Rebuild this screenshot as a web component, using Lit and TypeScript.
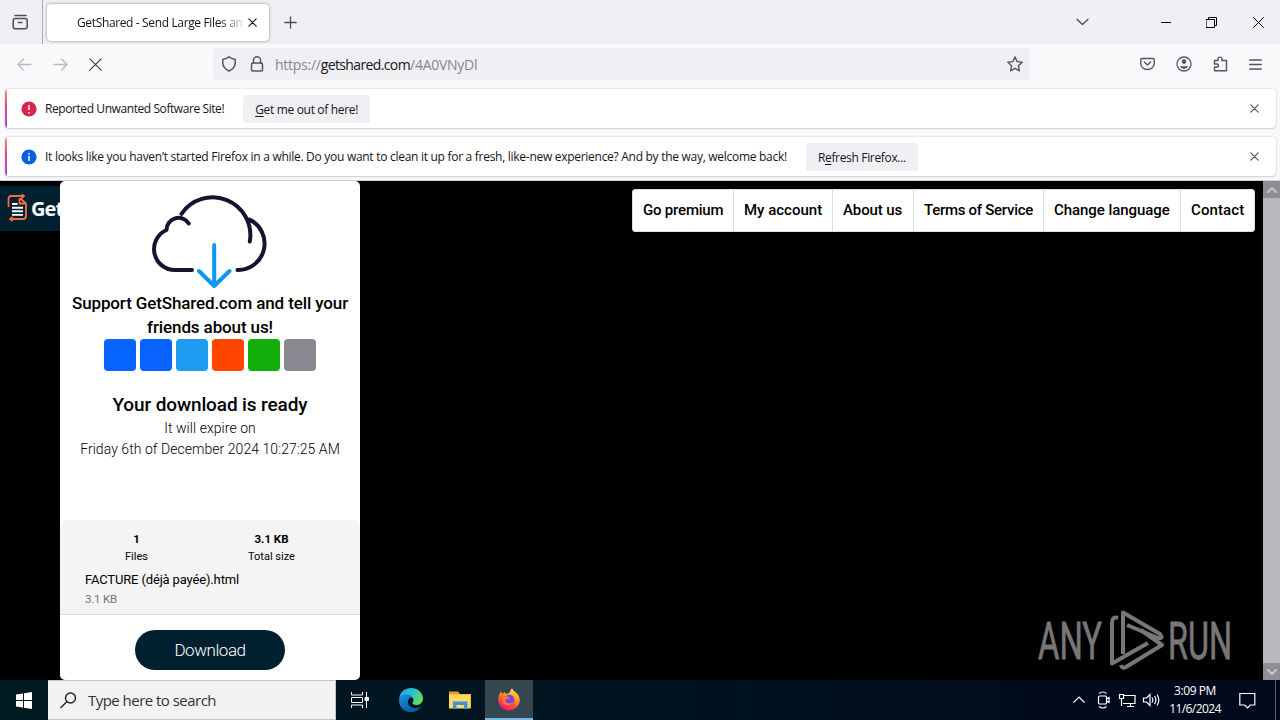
import { LitElement, html, css, svg } from "lit";

const icon = (w: number, h: number, body: unknown, cls = "") =>
  html`<svg class="ic ${cls}" width=${w} height=${h} viewBox="0 0 ${w} ${h}" fill="none" stroke="currentColor" stroke-width="1.3" stroke-linecap="round" stroke-linejoin="round">${body}</svg>`;

const cross = (n: number, cls = "") => icon(n, n, svg`<path d="M.8 .8L${n - 0.8} ${n - 0.8}M${n - 0.8} .8L.8 ${n - 0.8}" stroke-width="1.15"/>`, cls);

class BrowserChrome extends LitElement {
  static styles = css`
    :host { display: block; height: 180px; background: #f9f9fb; color: #15141a; font: 12px/18px "Open Sans", sans-serif; letter-spacing: -0.38px; }
    * { box-sizing: border-box; }
    .ic { display: block; flex: none; }
    .tabs { display: flex; height: 44px; background: #f0f0f4; align-items: center; color: #4e4d56; }
    .view { width: 43px; height: 44px; padding: 14px 0 0 12px; border-right: 1px solid #a9a9b2; }
    .tab { width: 222px; height: 37px; margin: 0 15px 0 4px; background: #fff; border-radius: 4px; box-shadow: 0 0 3px rgba(0,0,0,.45); display: flex; align-items: center; padding: 0 11px 0 30px; color: #15141a; }
    .title { width: 165px; margin-right: 6px; padding-top: 2px; white-space: nowrap; overflow: hidden; letter-spacing: -0.36px; -webkit-mask-image: linear-gradient(90deg, #000 142px, transparent 170px); }
    .down { margin-left: 779px; }
    .min { margin-left: 72px; color: #000; }
    .max { margin-left: 35px; color: #000; }
    .close { margin-left: 36px; color: #000; }
    .bar { display: flex; height: 42px; align-items: center; padding: 0 0 2px 17px; color: #55545e; }
    .off { color: #b9b9c0; margin-right: 21px; }
    .stop { margin-right: 111px; color: #3a3942; }
    .url { width: 817px; height: 32px; background: #f0f0f4; border-radius: 3px; display: flex; align-items: center; padding: 0 7px 0 9px; }
    .lock { margin: 0 11px 0 14px; }
    .addr { flex: 1; font-size: 14px; letter-spacing: -0.26px; color: #85848e; padding-top: 2px; white-space: nowrap; }
    .addr b { font-weight: 400; color: #15141a; letter-spacing: -0.62px; }
    .tools { display: flex; align-items: center; gap: 21px; margin-left: 110px; }
    .note { display: flex; align-items: center; height: 39px; margin: 3px 4px 9px 5px; background: #fff; border-radius: 4px; box-shadow: 0 0 2px rgba(58,57,68,.3), 0 1px 1px rgba(58,57,68,.12); overflow: hidden; white-space: nowrap; }
    .edge { width: 2px; height: 39px; margin-right: 14px; background: linear-gradient(#f3a35f, #d7468e 45%, #9059c8); }
    .txt { margin: 1px 19px 0 8px; }
    .red { letter-spacing: -0.42px; }
    .long { letter-spacing: -0.283px; }
    .btn { height: 28px; padding: 6px 12px 0; background: #f0f0f4; border-radius: 3px; letter-spacing: -0.33px; }
    .btn u { text-underline-offset: 2px; }
    .x { margin-left: auto; margin-right: 17px; color: #55545e; }
  `;
  render() {
    const badge = (c: string, d: unknown) => html`<svg class="ic" width="16" height="16"><circle cx="8" cy="8" r="7.6" fill=${c} />${d}</svg>`;
    return html`
      <div class="tabs">
        <div class="view">${icon(17, 16, svg`<path d="M3 1.500h11M1.200 6.500a2 2 0 0 1 2-2h10a2 2 0 0 1 2 2v6.300a2 2 0 0 1-2 2h-10a2 2 0 0 1-2-2zM6.500 8.500h3.500" stroke-width="1.500"/>`)}</div>
        <div class="tab"><span class="title">GetShared - Send Large Files and</span>${cross(9)}</div>
        ${icon(13, 13, svg`<path d="M6.500 .8v11.400M.8 6.500h11.400"/>`)}
        ${icon(13, 8, svg`<path d="M1 1.200l5.500 5.300L12 1.200"/>`, "down")}
        ${icon(10, 11, svg`<path d="M0 5.500h10" stroke-width="1"/>`, "min")}
        ${icon(11, 11, svg`<path d="M.5 2.500h8v8h-8zM2.500 2.500v-2h8v8h-2" stroke-width="1"/>`, "max")}
        ${icon(11, 11, svg`<path d="M.5 .5l10 10M10.500 .5l-10 10" stroke-width="1"/>`, "close")}
      </div>
      <div class="bar">
        ${icon(15, 13, svg`<path d="M14 6.500H1M6.500 1L1 6.500 6.500 12"/>`, "off")}
        ${icon(15, 13, svg`<path d="M1 6.500h13M8.500 1L14 6.500 8.500 12"/>`, "off")}
        ${cross(13, "stop")}
        <div class="url">
          ${icon(14, 16, svg`<path d="M7 .8Q9 2.800 13.200 3.400V7Q13 12 7 15.200 1 12 .8 7V3.400Q5 2.800 7 .8z" stroke-width="1.500"/>`)}
          ${icon(14, 16, svg`<rect x="1.500" y="7" width="11" height="8" rx="1.500" stroke-width="1.500"/><path d="M3.500 7V4a3.500 3.200 0 0 1 7 0v3" stroke-width="1.500"/>`, "lock")}
          <span class="addr">https://<b>getshared.com</b>/4A0VNyDl</span>
          ${icon(16, 16, svg`<path d="M8 .9l2.100 4.700 5.100.6-3.800 3.500 1 5.100L8 12.300l-4.400 2.500 1-5.100L.8 6.200l5.100-.6z" stroke-width="1.400"/>`)}
        </div>
        <div class="tools">
          ${icon(15, 14, svg`<path d="M2 1.500h11q1.200 0 1.200 1.200V6.500a6.700 6 0 0 1-13.400 0V2.700Q.8 1.500 2 1.500zM4.300 5l3.200 3 3.200-3" stroke-width="1.400"/>`)}
          ${icon(16, 16, svg`<circle cx="8" cy="8" r="7"/><circle cx="8" cy="5.600" r="2.300" fill="currentColor" stroke="none"/><path d="M3.800 10.200h8.400Q11 13 8 13t-4.200-2.800z" fill="currentColor" stroke="none"/>`)}
          ${icon(15, 16, svg`<path d="M1.500 4.500H5V3a1.900 1.900 0 0 1 3.800 0v1.500h4.700v10.300H1.500V11H4a1.500 1.500 0 0 0 0-3H1.500z" stroke-width="1.400"/>`)}
          ${icon(13, 11, svg`<path d="M.7 1h11.600M.7 5.500h11.600M.7 10h11.600"/>`)}
        </div>
      </div>
      <div class="note"><span class="edge"></span>
        ${badge("#d7264c", svg`<path d="M8 4v5M8 11v1.500" stroke="#fff" stroke-width="1.500"/>`)}
        <span class="txt red">Reported Unwanted Software Site!</span><span class="btn"><u>G</u>et me out of here!</span>${cross(9, "x")}</div>
      <div class="note"><span class="edge"></span>
        ${badge("#0560df", svg`<path d="M8 7v5M8 4v1.500" stroke="#fff" stroke-width="1.500"/>`)}
        <span class="txt long">It looks like you haven’t started Firefox in a while. Do you want to clean it up for a fresh, like-new experience? And by the way, welcome back!</span><span class="btn">R<u>e</u>fresh Firefox...</span>${cross(9, "x")}</div>
    `;
  }
}
customElements.define("browser-chrome", BrowserChrome);

class SharePage extends LitElement {
  static styles = css`
    :host { display: flex; box-sizing: border-box; height: 500px; border-top: 1px solid #cfcfcf; background: #000; color: #000; font-family: Roboto, sans-serif; position: relative; overflow: hidden; }
    * { box-sizing: border-box; }
    .logo { width: 60px; height: 45px; margin-top: 5px; background: #001f2f; display: flex; align-items: center; padding: 0 0 1px 7px; overflow: hidden; color: #fff; font: 700 20px "Open Sans", sans-serif; letter-spacing: -0.9px; }
    .logo svg { flex: none; margin-right: 2px; }
    .card { width: 300px; height: 499px; background: #fff; border-radius: 5px; text-align: center; display: flex; flex-direction: column; overflow: hidden; }
    .cloud { display: block; flex: none; margin: 11px auto 0; }
    .lead { font-size: 17px; font-weight: 500; line-height: 24px; letter-spacing: -0.12px; margin-top: 1px; }
    .share { display: flex; gap: 4px; justify-content: center; }
    .share i { width: 32px; height: 32px; border-radius: 4px; }
    .fb { background: #0866ff; } .ms { background: #0a63ff; } .tw { background: #1d9bf0; } .rd { background: #ff4500; } .wa { background: #12af0a; } .ml { background: #888990; }
    .ready { font-size: 19px; font-weight: 500; line-height: 24px; letter-spacing: -0.116px; margin-top: 22px; }
    .exp { font-size: 14px; font-weight: 300; line-height: 21px; margin-top: 1px; color: #000; letter-spacing: 0.05px; }
    .info { margin-top: auto; height: 95px; background: #f4f4f4; border-radius: 8px 8px 0 0; border-bottom: 1px solid #dcdcdc; }
    .stats { display: grid; grid-template-columns: 135px 135px; padding: 11px 0 0 9px; font-size: 11px; line-height: 17px; }
    .stats b { display: block; font-size: 11.500px; }
    .file { text-align: left; padding: 6px 0 0 25px; font-size: 13px; line-height: 18px; letter-spacing: -0.15px; }
    .size { font-size: 11.500px; font-weight: 400; color: #757575; line-height: 20px; letter-spacing: -0.2px; }
    .foot { height: 65px; padding-top: 15px; }
    .dl { width: 150px; height: 40px; margin: 0 auto; border-radius: 20px; background: #001f2f; color: #fff; font-size: 17px; font-weight: 300; line-height: 41px; letter-spacing: -0.45px; }
    .nav { display: flex; height: 43px; margin: 8px 8px 0 auto; background: #fff; border-radius: 3px; border: 1px solid #ddd; font-size: 15px; font-weight: 500; line-height: 41px; }
    .nav span { padding-left: 10px; border-right: 1px solid #dcdcdc; white-space: nowrap; }
    .nav span:last-child { border: 0; }
    .n1 { width: 101px; letter-spacing: -0.200px; } .n2 { width: 99px; } .n3 { width: 81px; letter-spacing: -0.100px; } .n4 { width: 130px; letter-spacing: -0.280px; } .n5 { width: 137px; letter-spacing: -0.060px; } .n6 { width: 73px; letter-spacing: 0.1px; }
    .scroll { width: 17px; background: #b8b8be; display: flex; flex-direction: column; justify-content: space-between; }
    .arrow { height: 17px; background: #8f8e94; display: grid; place-items: center; color: #c5c5cb; }
    .mark { position: absolute; left: 1036px; top: 427px; }
  `;
  render() {
    return html`
      <div class="logo"><svg width="22" height="28" fill="none" stroke="#f36e45" stroke-width="1.800"><path d="M1.500 13V5Q1.500 2 4.500 2H17M14.500 0.500l2.500 1.500L14.500 4M19 9v13q0 3-3 3H3M5.500 23L3 25 5.500 27M12.500 5v4.500H19L14 5z" stroke-linejoin="round"/><path d="M5 10h5.500M5 13.700h11M5 17.300h11M5 20.900h11" stroke="#fff" stroke-width="1.900"/></svg>GetShared</div>
      <div class="card">
        <svg class="cloud" width="120" height="98" viewBox="150 193 120 98" fill="none" stroke="#17132f" stroke-width="4" stroke-linecap="round" stroke-linejoin="round">
          <path d="M192 271H175.500A20.900 20.900 0 0 1 166.500 231A12 12 0 0 1 188.700 224.500M181.500 214.800A37.700 37.700 0 0 1 249.800 242.500M249.500 220.600A26.500 26.500 0 0 1 237.500 271"/>
          <path d="M214.200 246V286M199 272L214.200 287 229.500 272" stroke="#0b98f2"/>
        </svg>
        <div class="lead">Support GetShared.com and tell your<br />friends about us!</div>
        <div class="share"><i class="fb"></i><i class="ms"></i><i class="tw"></i><i class="rd"></i><i class="wa"></i><i class="ml"></i></div>
        <div class="ready">Your download is ready</div>
        <div class="exp">It will expire on<br />Friday 6th of December 2024 10:27:25 AM</div>
        <div class="info">
          <div class="stats"><span><b>1</b>Files</span><span><b>3.1 KB</b>Total size</span></div>
          <div class="file">FACTURE (déjà payée).html<div class="size">3.1 KB</div></div>
        </div>
        <div class="foot"><div class="dl">Download</div></div>
      </div>
      <div class="nav"><span class="n1">Go premium</span><span class="n2">My account</span><span class="n3">About us</span><span class="n4">Terms of Service</span><span class="n5">Change language</span><span class="n6">Contact</span></div>
      <div class="scroll">
        <div class="arrow">${icon(10, 6, svg`<path d="M1 5l4-4 4 4" stroke-width="2"/>`)}</div>
        <div class="arrow">${icon(10, 6, svg`<path d="M1 1l4 4 4-4" stroke-width="2"/>`)}</div>
      </div>
      <svg class="mark" width="210" height="70" fill="#777" stroke="#777" font-family="Roboto, sans-serif" font-size="52">
        <text x="2" y="51" stroke-width=".8" textLength="64" lengthAdjust="spacingAndGlyphs">ANY</text>
        <text x="132" y="51" stroke-width=".8" textLength="64" lengthAdjust="spacingAndGlyphs">RUN</text>
        <g fill="none" stroke-width="4" stroke-linejoin="round">
          <path d="M82 10Q76 8 76 15V55.500L112 35"/>
          <path d="M87 46V4.500L124 26Q128 31 122 30L91 17"/>
          <path d="M105 22L126 37 90 59Q86 61 85 57"/>
        </g>
      </svg>
    `;
  }
}
customElements.define("share-page", SharePage);

class TaskBar extends LitElement {
  static styles = css`
    :host { display: flex; height: 40px; background: linear-gradient(90deg, #001a22, #00141f 45%, #010a1c 85%); color: #fff; font: 12px "Open Sans", sans-serif; align-items: center; }
    * { box-sizing: border-box; }
    svg { display: block; flex: none; }
    .start { width: 48px; padding-left: 16px; }
    .search { width: 288px; height: 40px; background: #f2f2f2; border: 1px solid #c4c4c4; border-width: 1px 1px 1px 0; display: flex; align-items: center; padding-left: 12px; gap: 11px; color: #333; font-size: 15px; letter-spacing: -0.53px; }
    .app { width: 48px; height: 40px; display: grid; place-items: center; margin-right: 1px; }
    .task { margin-right: 3px; }
    .on { background: #34474f; border-bottom: 2px solid #76b9ed; }
    .tray { margin-left: auto; display: flex; align-items: center; }
    .clock { width: 68px; margin: 0 10px 0 0; text-align: center; line-height: 18px; letter-spacing: -0.420px; }
    .date { letter-spacing: -0.600px; }
    .end { width: 1px; height: 40px; background: #536070; margin: 0 4px 0 19px; }
  `;
  render() {
    return html`
      <div class="start"><svg width="16" height="17" fill="#fff"><path d="M0 2.400l7-1V8H0zM8 1.200L16 0v8H8zM0 9h7v6.600l-7-1zM8 9h8v8l-8-1.200z"/></svg></div>
      <div class="search"><svg width="17" height="17" fill="none" stroke="#222" stroke-width="1.400"><circle cx="10.500" cy="6" r="5"/><path d="M7 9.500L.5 16"/></svg><span>Type here to search</span></div>
      <div class="app task"><svg width="18" height="16" fill="none" stroke="#fff"><path d="M.5 0v3h11V0M.5 16v-3h11v3M.5 5.500h11v5H.5zM15.500 0v16" /><path d="M14 5.500h3.500v3H14z" fill="#fff"/></svg></div>
      <div class="app"><svg width="26" height="26" viewBox="0 0 26 26">
        <defs><linearGradient id="a" x1="0" y1="0" x2="1" y2=".5"><stop offset="0" stop-color="#2b9ee8"/><stop offset=".55" stop-color="#2bc0d4"/><stop offset="1" stop-color="#62dc5c"/></linearGradient><linearGradient id="b" x1="0" y1="0" x2=".6" y2="1"><stop offset="0" stop-color="#1692e0"/><stop offset="1" stop-color="#0c59a4"/></linearGradient></defs>
        <path d="M1.200 11C2 5 7 1 13 1c7 0 12 5 12 10.500 0 4-3 6.500-6.500 6.500-3 0-4.500-1.200-4-2.200 2-2.500 1-6.800-4-6.800-4 0-8 1-9.300 2z" fill="url(#a)"/>
        <path d="M1 13.500C1 9 5 7.500 8.500 7.500c3.500 0 5.600 1.500 6.200 3.500C11 10 9.500 13 10 16c.8 4.500 7 7 13.500 3.500C21 23.500 17 25.200 13 25.200 6 25.200 1 20 1 13.500z" fill="url(#b)"/>
      </svg></div>
      <div class="app"><svg width="22" height="20"><path d="M0 1.500h9l2 2.500h11v14H0z" fill="#e9a21c"/><path d="M1 4.500h20.500V18.500H0V5z" fill="#ffd766"/><path d="M4 11.500h14.500V19H15v-4H7.500v4H4z" fill="#3f95d4"/></svg></div>
      <div class="app on"><svg width="24" height="24" viewBox="0 0 24 24">
        <defs><linearGradient id="f" x1=".8" y1="0" x2=".3" y2="1"><stop offset="0" stop-color="#fff04a"/><stop offset=".4" stop-color="#ff9a24"/><stop offset=".75" stop-color="#ff3c48"/><stop offset="1" stop-color="#e31587"/></linearGradient></defs>
        <path d="M15 1c.5 2 2.500 3.500 4.500 5 2 2 3.300 4.500 3.300 7.500A10.800 10.200 0 0 1 12 23.500 10.800 10.200 0 0 1 1.200 13c0-3.500 1-6.500 3-8.500L5.500 7l2-2L9 7c2-.5 3.500-1 4-2.500z" fill="url(#f)"/>
        <circle cx="12.300" cy="12.800" r="5" fill="#7a45e5"/><path d="M5 9.500c3-2 6.500 0 8 1.500-1.500 1.800-4 .5-5 2.500 1 3.500 6 3.500 8 1.500-1.500 4-9 4.500-10.700-.5z" fill="#ff7a30"/>
      </svg></div>
      <div class="tray">
        <svg width="88" height="20" viewBox="0 0 88 20" fill="none" stroke="#fff" stroke-width="1.200">
          <path d="M.5 12.500L6 7l5.500 5.500"/>
          <path d="M26.500 6h6q1 0 1 1v6q0 1-1 1h-6q-1 0-1-1V7q0-1 1-1zM33.500 9l2.500-1.500v5L33.500 11M26 3.500q4-3 7.500 0M26 16.500q4 3 7.500 0"/>
          <path d="M50.500 5.500H62v8H50M54 16.500h7M57.500 13.500v3M46.500 4.500h4v4h-4zM48.500 8.500v7.500"/>
          <path d="M70.500 8h3l3.500-3.500v11L73.500 12h-3zM79 7.500q1.800 2.500 0 5M81.500 6q2.800 4 0 8M84 4.500q3.700 5.500 0 11"/>
        </svg>
        <div class="clock">3:09 PM<br /><span class="date">11/6/2024</span></div>
        <svg width="17" height="17" fill="none" stroke="#fff" stroke-width="1.200"><path d="M.8 1.500h15v11.500h-4.500L8.500 15.800 5.700 13H.8z"/></svg>
        <div class="end"></div>
      </div>
    `;
  }
}
customElements.define("task-bar", TaskBar);

class AppRoot extends LitElement {
  static styles = css`:host { display: block; width: 1280px; height: 720px; overflow: hidden; }`;
  render() {
    return html`<browser-chrome></browser-chrome><share-page></share-page><task-bar></task-bar>`;
  }
}
customElements.define("app-root", AppRoot);
